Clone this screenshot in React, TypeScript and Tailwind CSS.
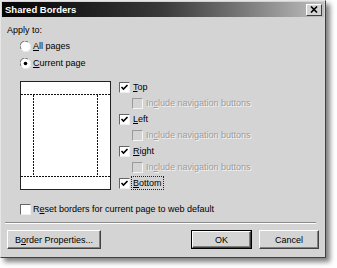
import React from "react";

const font = "font-['Liberation_Sans',Arial,sans-serif]";

function Check() {
  return (
    <svg width="9" height="9" viewBox="0 0 9 9" className="block">
      <path d="M1.5 4 L3.5 6 L7.5 2" stroke="#000" strokeWidth="1.6" fill="none" />
    </svg>
  );
}

function CheckBox({ checked, disabled }: { checked?: boolean; disabled?: boolean }) {
  return (
    <div
      className={
        disabled
          ? "w-[11px] h-[11px] shrink-0 border border-t-[#9a9a9a] border-l-[#9a9a9a] border-b-[#f4f4f4] border-r-[#f4f4f4] bg-[#d4d4d4]"
          : "w-[11px] h-[11px] shrink-0 border border-t-[#666] border-l-[#666] border-b-[#efefef] border-r-[#efefef] bg-white flex items-center justify-center"
      }
    >
      {checked ? <Check /> : null}
    </div>
  );
}

function Radio({ checked }: { checked?: boolean }) {
  return (
    <svg width="11" height="11" viewBox="0 0 11 11" className="block shrink-0">
      <circle cx="5.5" cy="5.5" r="5" fill="#fff" />
      <path d="M1 8 A5 5 0 0 1 8 1" stroke="#777" strokeWidth="1" fill="none" />
      <path d="M3 10 A5 5 0 0 0 10 3" stroke="#ececec" strokeWidth="1" fill="none" />
      {checked ? <circle cx="5.5" cy="5.5" r="1.8" fill="#000" /> : null}
    </svg>
  );
}

function Row({ children }: { children: React.ReactNode }) {
  return <div className="h-[16px] flex items-center">{children}</div>;
}

function Btn({ children, w, def }: { children: React.ReactNode; w: string; def?: boolean }) {
  return (
    <div className={`${w} h-[19px] ${def ? "border border-black" : ""}`}>
      <div className="w-full h-full border border-t-white border-l-white border-b-[#404040] border-r-[#404040] shadow-[inset_-1px_-1px_0_#808080] flex items-center justify-center text-[9px] leading-[12px]">
        {children}
      </div>
    </div>
  );
}

export default function App() {
  return (
    <div className={`w-[337px] h-[268px] bg-white ${font} text-black`}>
      <div className="w-[326px] h-[258px] bg-[#d4d4d4] border border-t-[#e6e6e6] border-l-[#e6e6e6] border-b-[#404040] border-r-[#404040] shadow-[4px_4px_5px_rgba(0,0,0,0.5)] flex flex-col">
        {/* title bar */}
        <div className="mx-[1px] mt-[1px] h-[15px] bg-gradient-to-r from-[#050505] via-[#3a3a3a] to-[#c0c0c0] flex items-center justify-between pl-[3px] pr-[2px]">
          <span className="text-white font-bold text-[9.5px] leading-[12px]">Shared Borders</span>
          <div className="w-[16px] h-[12px] bg-[#d4d4d4] border border-t-white border-l-white border-b-[#404040] border-r-[#404040] flex items-center justify-center">
            <svg width="8" height="7" viewBox="0 0 8 7" className="block">
              <path d="M1 0.5 L7 6.5 M7 0.5 L1 6.5" stroke="#000" strokeWidth="1.6" />
            </svg>
          </div>
        </div>

        <div className="ml-[6px] mt-[7px] h-[12px] text-[9px] leading-[12px]">Apply to:</div>

        <div className="ml-[19px] mt-[4px] h-[12px] flex items-center gap-[2px] text-[9px] leading-[12px]">
          <Radio />
          <span>
            <span className="underline">A</span>ll pages
          </span>
        </div>
        <div className="ml-[19px] mt-[5px] h-[12px] flex items-center gap-[2px] text-[9px] leading-[12px]">
          <Radio checked />
          <span>
            <span className="underline">C</span>urrent page
          </span>
        </div>

        <div className="mt-[10px] flex items-start">
          <div className="ml-[19px] mt-[2px]">
            <svg width="91" height="109" viewBox="0 0 91 109" className="block">
              <rect x="0.5" y="0.5" width="90" height="108" fill="#fff" stroke="#222" />
              <path d="M1 13.5 H90 M1 95.5 H90" stroke="#111" strokeDasharray="2 1" />
              <path d="M13.5 14 V95 M77.5 14 V95" stroke="#111" strokeDasharray="2 1" />
            </svg>
          </div>
          <div className="ml-[8px] flex flex-col text-[9px] leading-[12px]">
            <Row>
              <CheckBox checked />
              <span className="ml-[3px]">
                <span className="underline">T</span>op
              </span>
            </Row>
            <Row>
              <div className="ml-[13px] flex items-center">
                <CheckBox disabled />
                <span className="ml-[3px] text-[#9c9c9c] [text-shadow:1px_1px_0_#f4f4f4]">
                  In<span className="underline">c</span>lude navigation buttons
                </span>
              </div>
            </Row>
            <Row>
              <CheckBox checked />
              <span className="ml-[3px]">
                <span className="underline">L</span>eft
              </span>
            </Row>
            <Row>
              <div className="ml-[13px] flex items-center">
                <CheckBox disabled />
                <span className="ml-[3px] text-[#9c9c9c] [text-shadow:1px_1px_0_#f4f4f4]">
                  In<span className="underline">c</span>lude navigation buttons
                </span>
              </div>
            </Row>
            <Row>
              <CheckBox checked />
              <span className="ml-[3px]">
                <span className="underline">R</span>ight
              </span>
            </Row>
            <Row>
              <div className="ml-[13px] flex items-center">
                <CheckBox disabled />
                <span className="ml-[3px] text-[#9c9c9c] [text-shadow:1px_1px_0_#f4f4f4]">
                  In<span className="underline">c</span>lude navigation buttons
                </span>
              </div>
            </Row>
            <Row>
              <CheckBox checked />
              <span className="ml-[2px] px-[1px] outline outline-1 outline-dotted outline-[#222]">
                <span className="underline">B</span>ottom
              </span>
            </Row>
          </div>
        </div>

        <div className="ml-[19px] mt-[12px] h-[12px] flex items-center gap-[2px] text-[9px] leading-[12px]">
          <CheckBox />
          <span>
            R<span className="underline">e</span>set borders for current page to web default
          </span>
        </div>

        <div className="ml-[4px] mt-[7px] w-[311px] h-[2px] border-t border-t-[#8a8a8a] border-b border-b-white" />

        <div className="mt-[6px] ml-[6px] mr-[6px] flex items-center">
          <Btn w="w-[94px]">
            <span>
              B<span className="underline">o</span>rder Properties...
            </span>
          </Btn>
          <div className="flex-1" />
          <Btn w="w-[61px]" def>
            OK
          </Btn>
          <div className="w-[7px]" />
          <Btn w="w-[60px]">Cancel</Btn>
        </div>
      </div>
    </div>
  );
}
